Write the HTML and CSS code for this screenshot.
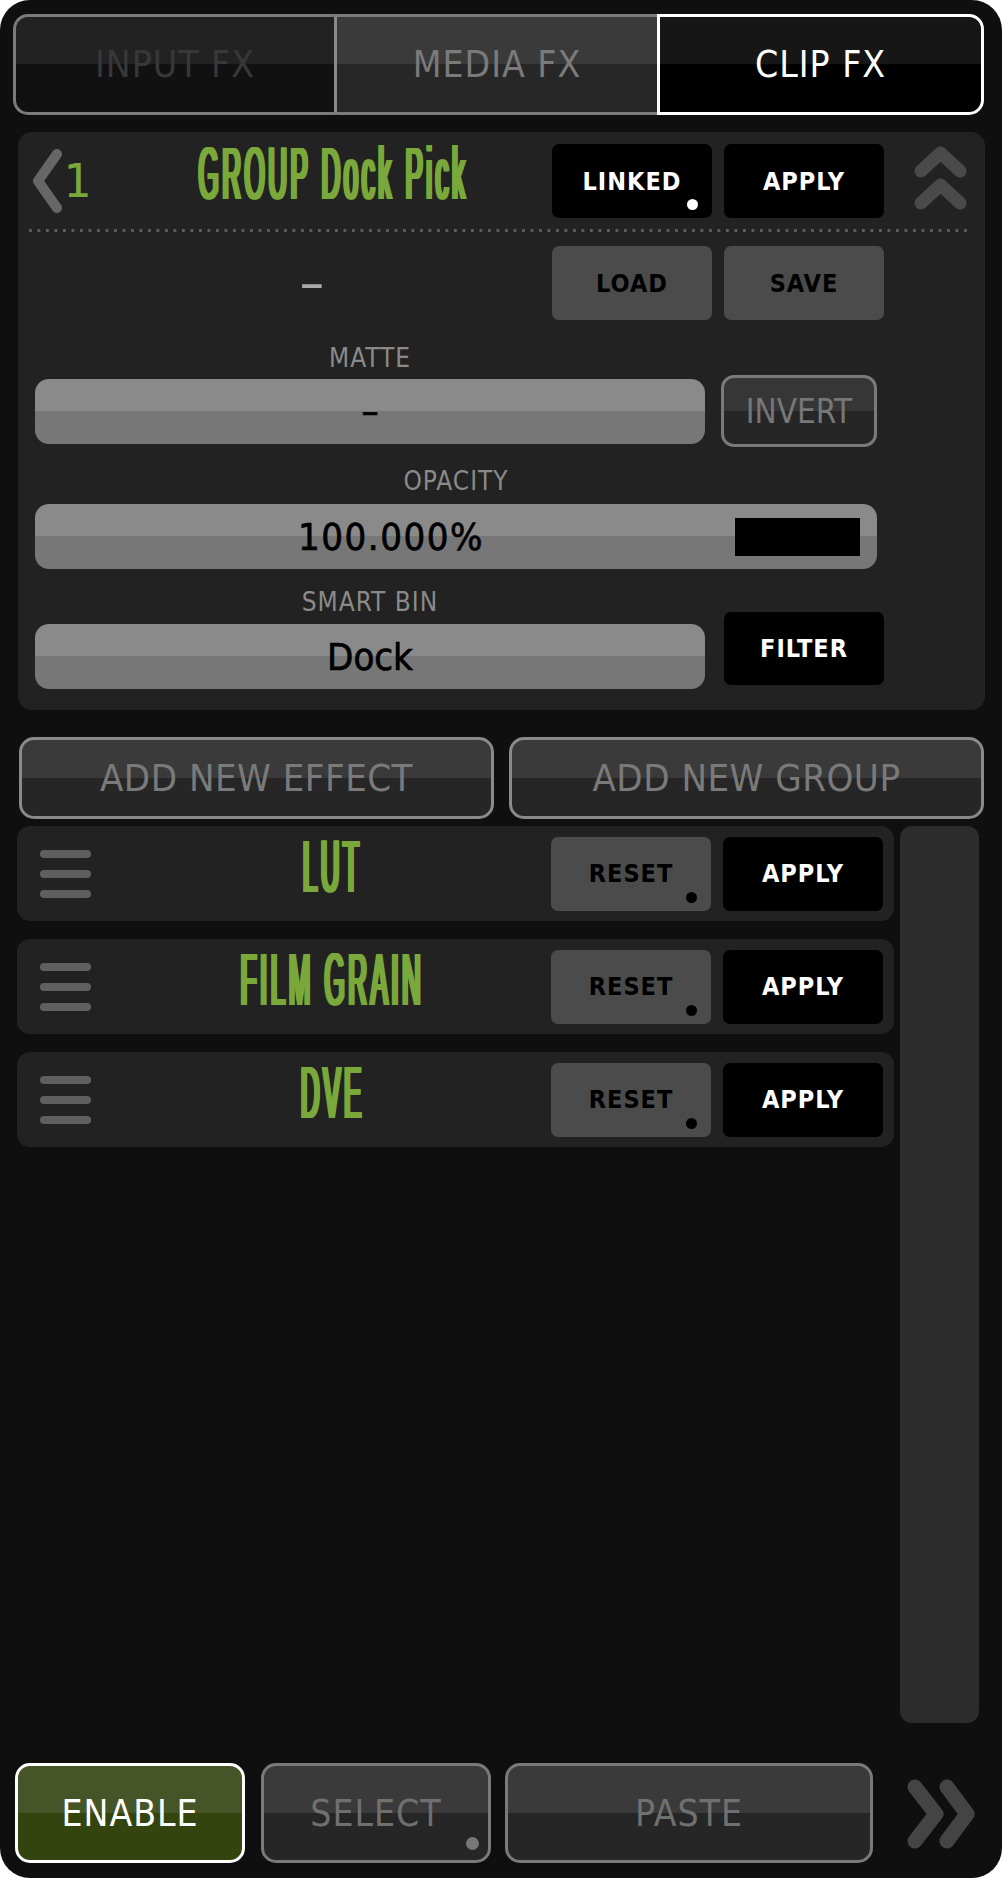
FILE: index.html
```html
<!DOCTYPE html>
<html>
<head>
<meta charset="utf-8">
<title>Clip FX</title>
<link rel="stylesheet" href="styles.css">
</head>
<body>
<div class="app">
  <div class="tabs">
    <div class="tab tab-input">INPUT FX</div>
    <div class="tab tab-media">MEDIA FX</div>
    <div class="tab tab-clip">CLIP FX</div>
  </div>

  <section class="group">
    <div class="g-head">
      <div class="back">
        <svg class="back-ico" viewBox="0 0 30 64"><polyline points="24,5 5,32 24,59" fill="none" stroke="#666" stroke-width="10" stroke-linecap="round" stroke-linejoin="round"/></svg>
        <span class="num">1</span>
      </div>
      <div class="title-box"><span class="title">GROUP Dock Pick</span></div>
      <div class="btn btn-black">LINKED<i class="dot dot-white"></i></div>
      <div class="btn btn-black">APPLY</div>
      <svg class="up-ico" viewBox="0 0 53 68"><polyline points="7,27 26.5,9 46,27" fill="none" stroke="#4a4a4a" stroke-width="13" stroke-linecap="round" stroke-linejoin="round"/><polyline points="7,59 26.5,41 46,59" fill="none" stroke="#4a4a4a" stroke-width="13" stroke-linecap="round" stroke-linejoin="round"/></svg>
    </div>
    <div class="dotline"></div>
    <div class="g-row2">
      <div class="dash">–</div>
      <div class="btn btn-gray">LOAD</div>
      <div class="btn btn-gray">SAVE</div>
    </div>
    <div class="label label-matte">MATTE</div>
    <div class="matte-row">
      <div class="field field-matte">–</div>
      <div class="invert">INVERT</div>
    </div>
    <div class="label label-opacity">OPACITY</div>
    <div class="slider">
      <span class="slider-val">100.000%</span>
      <span class="slider-knob"></span>
    </div>
    <div class="label label-bin">SMART BIN</div>
    <div class="bin-row">
      <div class="field field-bin">Dock</div>
      <div class="btn btn-black btn-filter">FILTER</div>
    </div>
  </section>

  <div class="add-row">
    <div class="outline-btn add-btn">ADD NEW EFFECT</div>
    <div class="outline-btn add-btn">ADD NEW GROUP</div>
  </div>

  <div class="list-area">
    <div class="fx-list">
      <div class="fx-row">
        <div class="burger"><i></i><i></i><i></i></div>
        <div class="title-box fx-title-box"><span class="title">LUT</span></div>
        <div class="btn btn-gray">RESET<i class="dot dot-black"></i></div>
        <div class="btn btn-black">APPLY</div>
      </div>
      <div class="fx-row">
        <div class="burger"><i></i><i></i><i></i></div>
        <div class="title-box fx-title-box"><span class="title">FILM GRAIN</span></div>
        <div class="btn btn-gray">RESET<i class="dot dot-black"></i></div>
        <div class="btn btn-black">APPLY</div>
      </div>
      <div class="fx-row">
        <div class="burger"><i></i><i></i><i></i></div>
        <div class="title-box fx-title-box"><span class="title">DVE</span></div>
        <div class="btn btn-gray">RESET<i class="dot dot-black"></i></div>
        <div class="btn btn-black">APPLY</div>
      </div>
    </div>
    <div class="track"></div>
  </div>

  <div class="footer">
    <div class="outline-btn enable-btn">ENABLE</div>
    <div class="outline-btn select-btn">SELECT<i class="dot dot-gray"></i></div>
    <div class="outline-btn paste-btn">PASTE</div>
    <svg class="next-ico" viewBox="0 0 68 70"><polyline points="8,8 29,35 8,62" fill="none" stroke="#444" stroke-width="15" stroke-linecap="round" stroke-linejoin="round"/><polyline points="40,8 60,35 40,62" fill="none" stroke="#444" stroke-width="15" stroke-linecap="round" stroke-linejoin="round"/></svg>
  </div>
</div>
</body>
</html>
```

FILE: styles.css
```css
* { box-sizing: border-box; margin: 0; padding: 0; }
html, body { background: #ffffff; }
body {
  width: 1002px;
  height: 1878px;
  overflow: hidden;
  font-family: "DejaVu Sans Condensed", "DejaVu Sans", sans-serif;
  font-stretch: condensed;
}
.app {
  width: 1002px;
  height: 1878px;
  background: #0f0f0f;
  border-radius: 30px;
  padding-top: 14px;
  display: flex;
  flex-direction: column;
}

/* tabs */
.tabs { display: flex; height: 101px; margin-left: 13px; width: 971px; }
.tab {
  display: flex; align-items: center; justify-content: center;
  font-size: 37px; letter-spacing: 1px;
  border: 3px solid #7b7b7b;
  background-clip: padding-box;
}
.tab-input {
  width: 324px;
  border-radius: 15px 0 0 15px;
  border-right-color: #8a8a8a;
  background-image: linear-gradient(#222222 50%, #111111 50%);
  color: #383838;
}
.tab-media {
  width: 320px;
  border-left: none; border-right: none;
  background-image: linear-gradient(#3a3a3a 50%, #272727 50%);
  color: #7a7a7a;
}
.tab-clip {
  width: 327px;
  border-color: #ffffff;
  border-radius: 0 15px 15px 0;
  background-image: linear-gradient(#161616 50%, #000000 50%);
  color: #ffffff;
}

/* group panel */
.group {
  margin: 17px 0 0 18px;
  width: 967px; height: 578px;
  background: #222222;
  border-radius: 14px;
  padding-top: 12px;
  display: flex; flex-direction: column;
}
.g-head { display: flex; align-items: center; height: 74px; }
.back { width: 94px; padding-left: 15px; display: flex; align-items: center; height: 74px; }
.back-ico { width: 30px; height: 64px; flex: none; }
.num { font-family: "DejaVu Sans Mono", monospace; font-size: 46px; color: #7aa83a; line-height: 1; }
.title-box {
  width: 440px; flex: none;
  display: flex; justify-content: center;
  white-space: nowrap;
  margin-bottom: 15px;
}
.title {
  display: inline-block;
  font-family: "Liberation Sans", sans-serif;
  font-stretch: normal;
  font-weight: 400;
  font-size: 74px;
  line-height: 74px;
  letter-spacing: 10px;
  color: #7aa83a;
  text-shadow: 2px 0 0 #7aa83a, 4px 0 0 #7aa83a, 6px 0 0 #7aa83a, 8px 0 0 #7aa83a, 10px 0 0 #7aa83a;
  transform: scaleX(0.351);
}
.btn {
  width: 160px; height: 74px; flex: none;
  border-radius: 7px;
  display: flex; align-items: center; justify-content: center;
  font-weight: 700; font-size: 25px; letter-spacing: 1px;
  position: relative;
}
.btn-black { background: #000000; color: #ffffff; }
.btn-gray { background: #4b4b4b; color: #000000; }
.btn + .btn { margin-left: 12px; }
.up-ico { width: 53px; height: 68px; margin-left: 30px; align-self: flex-start; flex: none; }

.dot { position: absolute; width: 11px; height: 11px; border-radius: 50%; left: 135px; top: 55px; }
.dot-white { background: #ffffff; }
.dot-black { background: #000000; }
.dot-gray { background: #777777; width: 13px; height: 13px; left: 202px; top: 71px; }

.dotline {
  margin: 11px 0 0 11px;
  width: 943px; height: 3px;
  background: linear-gradient(to right, #5c5c5c 3px, transparent 3px) 0 0 / 8.5px 3px repeat-x;
}
.g-row2 { display: flex; align-items: center; height: 74px; margin-top: 14px; }
.dash { width: 534px; padding-left: 54px; text-align: center; color: #aaaaaa; font-size: 54px; flex: none; line-height: 1; }

.label {
  margin-left: 17px;
  height: 30px; line-height: 30px;
  text-align: center;
  color: #8a8a8a;
  font-size: 26px;
  letter-spacing: 1px;
}
.label-matte { margin-top: 23px; width: 670px; }
.label-opacity { margin-top: 19px; width: 842px; }
.label-bin { margin-top: 18px; width: 670px; }

.field {
  width: 670px; height: 65px; flex: none;
  border-radius: 14px;
  background: linear-gradient(#8a8a8a 50%, #777777 50%);
  display: flex; align-items: center; justify-content: center;
  font-size: 38px; color: #000000;
  -webkit-text-stroke: 0.7px #000000;
}
.matte-row { margin: 2px 0 0 17px; height: 72px; display: flex; align-items: center; }
.invert {
  margin-left: 16px; width: 156px; height: 72px;
  border: 3px solid #7a7a7a; border-radius: 13px;
  background: linear-gradient(#363636 50%, #262626 50%);
  color: #777777; font-size: 33px;
  display: flex; align-items: center; justify-content: center;
}
.slider {
  margin: 8px 0 0 17px;
  width: 842px; height: 65px;
  border-radius: 14px;
  background: linear-gradient(#8a8a8a 50%, #777777 50%);
  display: flex; align-items: center;
}
.slider-val {
  flex: 1; padding-left: 12px; text-align: center;
  font-size: 38px; letter-spacing: 1.5px; color: #000000;
  -webkit-text-stroke: 0.7px #000000;
}
.slider-knob { width: 125px; height: 38px; background: #000000; margin-right: 17px; flex: none; }
.bin-row { margin: -5px 0 0 17px; display: flex; align-items: flex-start; }
.field-bin { margin-top: 12px; }
.btn-filter { margin-left: 19px; height: 73px; }

/* add buttons */
.add-row { margin: 27px 0 0 19px; width: 965px; height: 82px; display: flex; gap: 15px; }
.outline-btn {
  border: 3px solid #8a8a8a; border-radius: 15px;
  background: linear-gradient(#3a3a3a 50%, #262626 50%);
  color: #7a7a7a;
  display: flex; align-items: center; justify-content: center;
  position: relative;
}
.add-btn { flex: 1; font-size: 38px; letter-spacing: 0.5px; }

/* fx list */
.list-area { margin: 7px 0 0 17px; height: 897px; display: flex; gap: 6px; }
.fx-list { width: 877px; display: flex; flex-direction: column; gap: 18px; }
.fx-row {
  height: 95px; background: #222222; border-radius: 13px;
  display: flex; align-items: center; padding-left: 23px;
}
.burger { width: 51px; display: flex; flex-direction: column; gap: 12px; flex: none; }
.burger i { display: block; height: 8px; border-radius: 4px; background: #5f5f5f; }
.fx-title-box { margin-left: 20px; margin-bottom: 13px; }
.track { width: 79px; background: #2c2c2c; border-radius: 12px; }

/* footer */
.footer { margin: 40px 0 0 15px; height: 100px; display: flex; align-items: flex-start; }
.footer .outline-btn { height: 100px; font-size: 37px; letter-spacing: 1px; }
.enable-btn {
  width: 230px;
  border-color: #ffffff;
  background: linear-gradient(#465528 50%, #33440f 50%);
  color: #ffffff;
}
.select-btn { width: 230px; margin-left: 16px; border-color: #7a7a7a; color: #707070; }
.paste-btn { width: 368px; margin-left: 14px; border-color: #7a7a7a; color: #707070; }
.next-ico { width: 68px; height: 70px; margin: 16px 0 0 34px; flex: none; }
```
